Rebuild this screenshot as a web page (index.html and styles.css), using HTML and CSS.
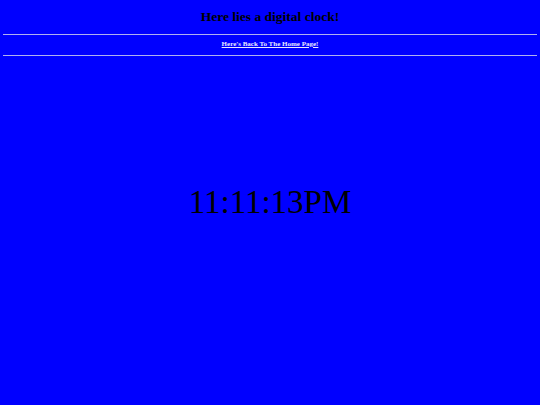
FILE: index.html
```html
<!DOCTYPE html>
<html>
<head>
<meta charset="utf-8">
<link rel="stylesheet" href="styles.css">
</head>
<body>
<h1 class="title">Here lies a digital clock!</h1>
<hr class="rule">
<h5 class="nav"><a class="home" href="#">Here's Back To The Home Page!</a></h5>
<hr class="rule">
<div class="clock-wrap"><div class="clock">11:11:13PM</div></div>
</body>
</html>
```
FILE: styles.css
```css
html, body {
  margin: 0;
  padding: 0;
}
body {
  background: #0000ff;
  color: #000;
  font-family: "Liberation Serif", "Times New Roman", serif;
  padding: 4px 3px;
}
.title {
  text-align: center;
  font-size: 13.5px;
  font-weight: bold;
  margin: 4px 0 0;
  line-height: 17px;
}
.rule {
  border: 0;
  height: 1px;
  background: #b0b0f0;
  margin: 9px 0 0;
}
.nav {
  text-align: center;
  font-size: 7px;
  font-weight: bold;
  margin: 0;
  padding: 7px 0 9px;
  line-height: 4px;
}
.home {
  color: #e8e8ff;
  text-decoration: underline;
}
.nav + .rule {
  margin-top: 0;
}
.clock-wrap {
  display: flex;
  justify-content: center;
  margin-top: 126px;
}
.clock {
  font-size: 33px;
  line-height: 40px;
}
```
